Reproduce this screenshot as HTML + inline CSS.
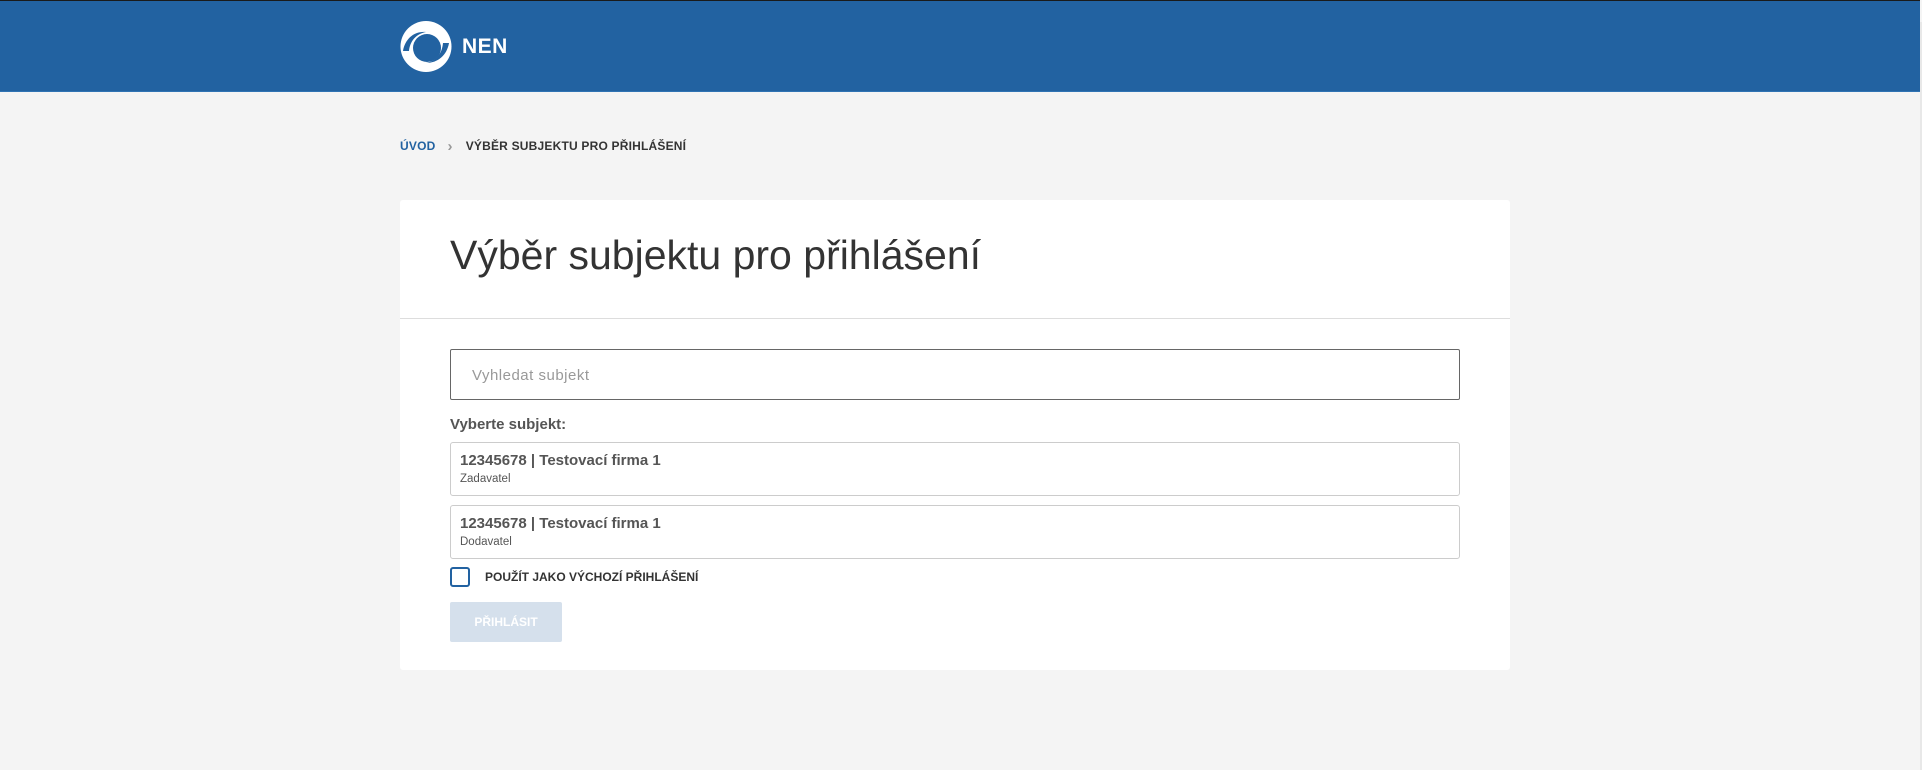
<!DOCTYPE html>
<html><head><meta charset="utf-8"><style>
*{margin:0;padding:0;box-sizing:border-box}
body{width:1922px;height:770px;background:#f4f4f4;font-family:"Liberation Sans",Arial,sans-serif;position:relative;overflow:hidden}
.hdr{position:absolute;left:0;top:0;width:1920px;height:92px;background:#2262a1;border-top:1px solid #1a1a1a;border-bottom:1px solid #2f73b3}
.strip{position:absolute;right:0;top:22px;width:2px;height:748px;background:#e8e8e8}
.logo{position:absolute;left:400px;top:21px}
.nen{position:absolute;left:462px;top:35px;color:#fff;font-weight:bold;font-size:21px;letter-spacing:0.5px}
.bc{position:absolute;top:137px;left:400px;font-size:12px;font-weight:bold;color:#333;letter-spacing:0.2px}
.bc .a{color:#2262a1}
.bc .s{color:#999;margin:0 13px 0 12px;font-size:15px;position:relative;top:1px}
.card{position:absolute;left:400px;top:200px;width:1110px;height:470px;background:#fff;border-radius:3px}
.title{position:absolute;left:50px;top:32px;font-size:41px;color:#333}
.div{position:absolute;left:0;top:118px;width:1110px;height:1px;background:#ddd}
.inp{position:absolute;left:50px;top:149px;width:1010px;height:51px;border:1px solid #666;border-radius:2px;color:#999;font-size:15px;padding:17px 0 0 21px;letter-spacing:0.5px}
.lbl{position:absolute;left:50px;top:216px;font-size:15px;font-weight:bold;color:#555}
.it{position:absolute;left:50px;width:1010px;height:54px;border:1px solid #ccc;border-radius:3px;padding:9px 0 0 9px;color:#555}
.it b{display:block;font-size:15px}
.it span{display:block;font-size:11.5px;margin-top:4px}
.cb{position:absolute;left:450px;top:567px;width:20px;height:20px;border:2px solid #2262a1;border-radius:3px}
.cbl{position:absolute;left:485px;top:570px;font-size:12px;font-weight:bold;color:#333}
.btn{position:absolute;left:450px;top:602px;width:112px;height:40px;background:#d5e0ec;border-radius:2px;color:#fff;font-size:12px;font-weight:bold;text-align:center;line-height:40px}
</style></head><body>
<div class="hdr"></div>
<div class="strip"></div>
<svg class="logo" width="52" height="52" viewBox="0 0 52 52">
<circle cx="26" cy="25.5" r="25.5" fill="#fff"/>
<ellipse cx="27" cy="27" rx="14" ry="14" fill="#2262a1"/>
<path d="M3 30 C5 18 14 10 26 11 C16 13 10 20 9 30Z" fill="#2262a1"/>
<path d="M49 22 C47 34 38 42 26 42 C36 40 42 33 43 22Z" fill="#2262a1"/>
</svg>
<div class="nen">NEN</div>
<div class="bc"><span class="a">ÚVOD</span><span class="s">›</span>VÝBĚR SUBJEKTU PRO PŘIHLÁŠENÍ</div>
<div class="card">
<div class="title">Výběr subjektu pro přihlášení</div>
<div class="div"></div>
<div class="inp">Vyhledat subjekt</div>
<div class="lbl">Vyberte subjekt:</div>
<div class="it" style="top:242px"><b>12345678 | Testovací firma 1</b><span>Zadavatel</span></div>
<div class="it" style="top:305px"><b>12345678 | Testovací firma 1</b><span>Dodavatel</span></div>
</div>
<div class="cb"></div>
<div class="cbl">POUŽÍT JAKO VÝCHOZÍ PŘIHLÁŠENÍ</div>
<div class="btn">PŘIHLÁSIT</div>
</body></html>
